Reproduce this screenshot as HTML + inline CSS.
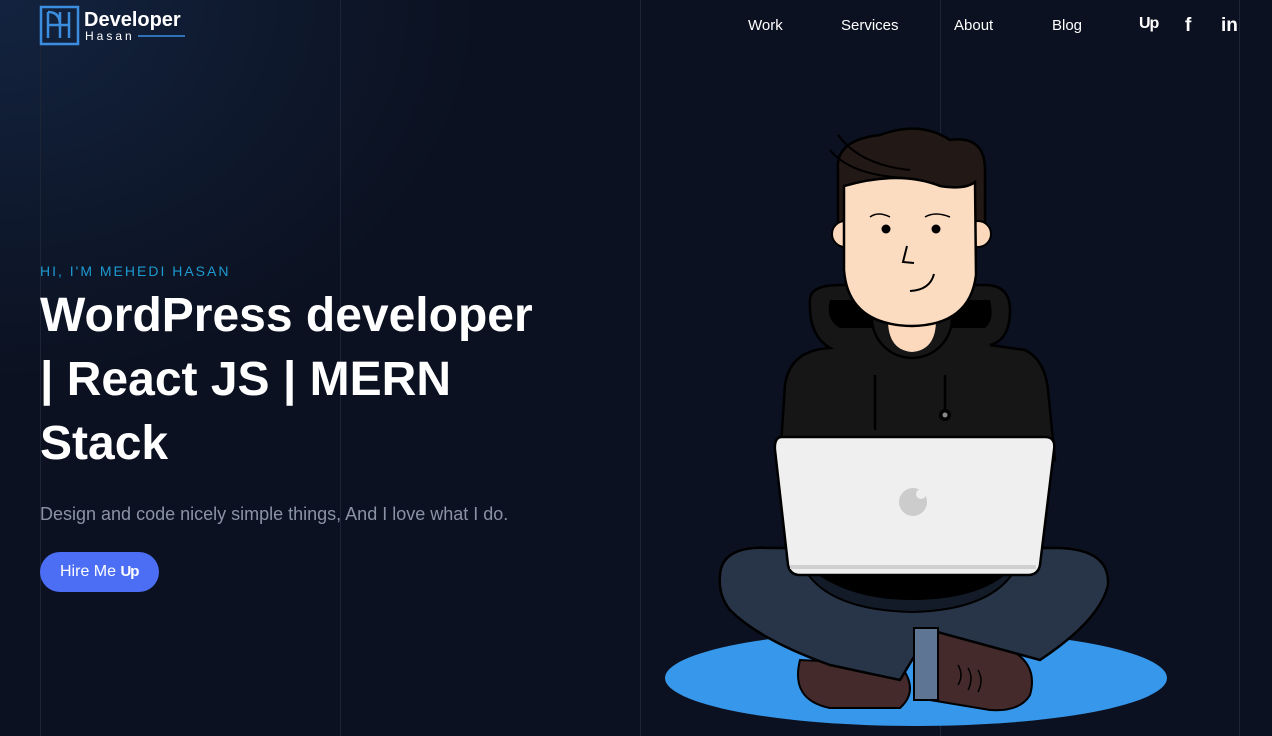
<!DOCTYPE html>
<html><head><meta charset="utf-8"><style>
*{margin:0;padding:0;box-sizing:border-box}
body{width:1272px;height:736px;overflow:hidden;background:#0b1120;font-family:"Liberation Sans",sans-serif;position:relative}
.bg{position:absolute;inset:0;background:radial-gradient(ellipse 480px 380px at 0 0,#13233f 0%,rgba(11,17,32,0) 100%)}
.vl{position:absolute;top:0;bottom:0;width:1px;background:#1c2436}
.nav a{position:absolute;top:17px;color:#fff;font-size:15px;text-decoration:none}
.hi{position:absolute;left:40px;top:263px;color:#1e9ad0;font-size:14px;letter-spacing:2px}
h1{position:absolute;left:40px;top:284px;color:#fff;font-size:48px;line-height:64px;font-weight:bold;width:500px;letter-spacing:0}
.p{position:absolute;left:40px;top:504px;color:#8a93a6;font-size:18px}
.btn{position:absolute;left:40px;top:552px;width:119px;height:40px;border-radius:20px;background:#4c6ef5;color:#fff;font-size:16px;line-height:40px;padding-left:20px}
</style></head><body>
<div class="bg"></div>
<div class="vl" style="left:40px"></div><div class="vl" style="left:340px"></div><div class="vl" style="left:640px"></div><div class="vl" style="left:940px"></div><div class="vl" style="left:1239px"></div>
<svg style="position:absolute;left:38px;top:4px" width="150" height="44" viewBox="0 0 150 44">
<rect x="3" y="3" width="37" height="37" fill="none" stroke="#3b8de0" stroke-width="2.5"/>
<path d="M10 8V34M10 21H30M22 8V34M31 8V34M10 8Q22 8 22 21" fill="none" stroke="#3b8de0" stroke-width="2.5"/>
<text x="46" y="22" fill="#fff" font-family="Liberation Sans" font-weight="bold" font-size="20">Developer</text>
<text x="47" y="36" fill="#fff" font-family="Liberation Sans" font-size="12" letter-spacing="3">Hasan</text>
<line x1="100" y1="32" x2="147" y2="32" stroke="#3b8de0" stroke-width="1.5"/>
</svg>
<div class="nav"><a style="left:748px">Work</a><a style="left:841px">Services</a><a style="left:954px">About</a><a style="left:1052px">Blog</a></div>
<div style="position:absolute;left:1139px;top:15px;color:#fff;font-weight:bold;font-size:16px;letter-spacing:-1px">Up</div>
<div style="position:absolute;left:1185px;top:15px;color:#fff;font-weight:bold;font-size:19px">f</div>
<div style="position:absolute;left:1221px;top:15px;color:#fff;font-weight:bold;font-size:19px">in</div>
<div class="hi">HI, I'M MEHEDI HASAN</div>
<h1>WordPress developer | React JS | MERN Stack</h1>
<div class="p">Design and code nicely simple things, And I love what I do.</div>
<div class="btn">Hire Me <b style="letter-spacing:-1px;font-size:15px">Up</b></div>
<svg style="position:absolute;left:0;top:0" width="1272" height="736" viewBox="0 0 1272 736">
<ellipse cx="916" cy="678" rx="251" ry="48" fill="#3797ea"/>
<path d="M800 660Q790 700 830 708L900 708Q920 690 900 665Z" fill="#442a2a" stroke="#000" stroke-width="2"/>
<path d="M930 630L1000 645Q1040 660 1030 695Q1020 712 990 710L930 700Z" fill="#442a2a" stroke="#000" stroke-width="2"/>
<path d="M810 300Q810 285 840 285L985 285Q1010 285 1010 310Q1010 340 990 345L1025 350Q1045 360 1048 390L1055 460L780 460L785 385Q790 350 830 348Q808 335 810 300Z" fill="#161616" stroke="#000" stroke-width="2.5"/>
<path d="M830 300L990 300Q995 320 985 328L840 328Q825 320 830 300Z" fill="#000"/>
<circle cx="912" cy="318" r="40" fill="#161616" stroke="#000" stroke-width="2.5"/>
<path d="M888 320Q888 350 912 352Q936 350 936 320Z" fill="#fcd9bc"/>
<path d="M875 375V430M945 375V410" stroke="#000" stroke-width="2.5"/><circle cx="945" cy="415" r="6" fill="#000"/><circle cx="945" cy="415" r="2.5" fill="#888"/>
<path d="M838 170Q835 140 880 135Q920 120 950 140Q985 135 985 170L985 230L838 230Z" fill="#221816" stroke="#000" stroke-width="2.5"/>
<circle cx="845" cy="234" r="13" fill="#fcd9bc" stroke="#000" stroke-width="2"/>
<circle cx="978" cy="234" r="13" fill="#fcd9bc" stroke="#000" stroke-width="2"/>
<path d="M844 186Q900 170 940 186Q965 190 975 182L976 275Q970 325 912 326Q848 325 844 270Z" fill="#fcdcc0" stroke="#000" stroke-width="2.5"/>
<path d="M838 135Q860 165 910 170M830 150Q850 175 905 178" fill="none" stroke="#000" stroke-width="2"/>
<path d="M870 217Q878 211 890 217M925 217Q935 211 950 217" fill="none" stroke="#000" stroke-width="1.5"/>
<circle cx="886" cy="229" r="4.5" fill="#000"/><circle cx="936" cy="229" r="4.5" fill="#000"/>
<path d="M907 246L903 262L914 263M910 291Q930 290 934 274" fill="none" stroke="#000" stroke-width="2"/>
<path d="M720 575Q722 545 770 548L1060 548Q1110 550 1108 585Q1100 620 1040 660L930 630L900 680L830 665Q760 640 730 610Q718 595 720 575Z" fill="#283549" stroke="#000" stroke-width="2.5"/>
<path d="M800 560Q820 610 912 612Q1000 610 1020 560Z" fill="#131b28" stroke="#000" stroke-width="2"/>
<path d="M800 560Q840 600 912 600Q990 600 1020 560Z" fill="#000"/>
<rect x="914" y="628" width="24" height="72" fill="#5e7593" stroke="#000" stroke-width="2"/>
<path d="M958 665Q964 675 958 685M968 668Q974 678 968 690M978 670Q984 680 978 692" fill="none" stroke="#000" stroke-width="1.5"/>
<path d="M782 437L1045 437Q1056 437 1054 450L1040 565Q1038 575 1028 575L800 575Q790 575 788 565L775 450Q774 437 782 437Z" fill="#efefef" stroke="#000" stroke-width="2.5"/>
<path d="M790 567L1036 567" stroke="#d0d0d0" stroke-width="4"/>
<circle cx="913" cy="502" r="14" fill="#ccc"/><circle cx="921" cy="494" r="5" fill="#efefef"/>
</svg>
</body></html>
